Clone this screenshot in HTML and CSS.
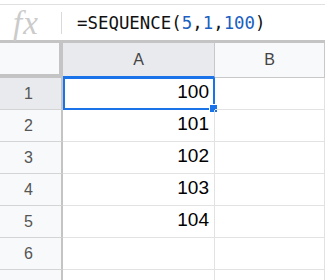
FILE: index.html
```html
<!DOCTYPE html>
<html lang="en">
<head>
  <meta charset="UTF-8">
  <title>SEQUENCE</title>
  <link rel="stylesheet" href="styles.css">
</head>
<body>
  <div class="formula-bar">
    <div class="fx">fx</div>
    <div class="formula">=SEQUENCE(<span class="num">5</span>,<span class="num">1</span>,<span class="num">100</span>)</div>
  </div>
  <div class="grid">
    <div class="corner"></div>
    <div class="col-head active">A</div>
    <div class="col-head">B</div>

    <div class="row-head active">1</div>
    <div class="cell selected">100<span class="handle"></span></div>
    <div class="cell"></div>

    <div class="row-head">2</div>
    <div class="cell">101</div>
    <div class="cell"></div>

    <div class="row-head">3</div>
    <div class="cell">102</div>
    <div class="cell"></div>

    <div class="row-head">4</div>
    <div class="cell">103</div>
    <div class="cell"></div>

    <div class="row-head">5</div>
    <div class="cell">104</div>
    <div class="cell"></div>

    <div class="row-head">6</div>
    <div class="cell"></div>
    <div class="cell"></div>

    <div class="row-head last"></div>
    <div class="cell last"></div>
    <div class="cell last"></div>
  </div>
</body>
</html>
```

FILE: styles.css
```css
body {
  margin: 0;
  padding-top: 4px;
  background: #fff;
  font-family: "Liberation Sans", Arial, sans-serif;
  overflow: hidden;
}
.formula-bar {
  display: flex;
  align-items: center;
  height: 35px;
  border-top: 1px solid #e0e0e0;
}
.fx {
  width: 62px;
  box-sizing: border-box;
  padding-left: 13px;
  font-family: "Liberation Serif", serif;
  font-style: italic;
  font-size: 33px;
  color: #cbcbcb;
  line-height: 22px;
  border-right: 1px solid #d9d9d9;
  height: 22px;
  letter-spacing: 1px;
}
.formula {
  padding-left: 15px;
  font-family: "DejaVu Sans Mono", monospace;
  font-size: 17.4px;
  color: #111;
}
.num {
  color: #1b5fc1;
}
.grid {
  display: grid;
  grid-template-columns: 63px 152px 1fr;
  grid-template-rows: 35px repeat(6, 32px) 10px;
  border-top: 3px solid #c4c4c4;
}
.grid > div {
  box-sizing: border-box;
}
.corner {
  background: #f8f9fa;
  border-right: 4px solid #c4c4c4;
  border-bottom: 4px solid #c4c4c4;
}
.col-head {
  display: flex;
  align-items: center;
  justify-content: center;
  background: #f8f9fa;
  color: #444;
  font-size: 16px;
  border-right: 1px solid #c8c8c8;
  border-bottom: 1px solid #c8c8c8;
}
.col-head.active {
  background: #e8eaed;
  border-bottom: 2px solid #1a73e8;
}
.row-head {
  display: flex;
  align-items: center;
  justify-content: center;
  padding-right: 4px;
  background: #f8f9fa;
  color: #555;
  font-size: 16px;
  border-right: 2px solid #c4c4c4;
  border-bottom: 1px solid #d4d4d4;
}
.row-head.active {
  background: #e8eaed;
}
.cell {
  position: relative;
  display: flex;
  align-items: flex-end;
  justify-content: flex-end;
  padding: 0 5px 6px 0;
  font-size: 19px;
  color: #000;
  border-right: 1px solid #e2e2e2;
  border-bottom: 1px solid #e2e2e2;
}
.last {
  border-bottom: none;
}
.cell.selected {
  border: 2px solid #1a73e8;
  border-top-width: 1px;
  padding-right: 4px;
  padding-bottom: 5px;
}
.handle {
  position: absolute;
  right: -5px;
  bottom: -5px;
  width: 7px;
  height: 7px;
  background: #1a73e8;
  border: 1px solid #fff;
}
```
